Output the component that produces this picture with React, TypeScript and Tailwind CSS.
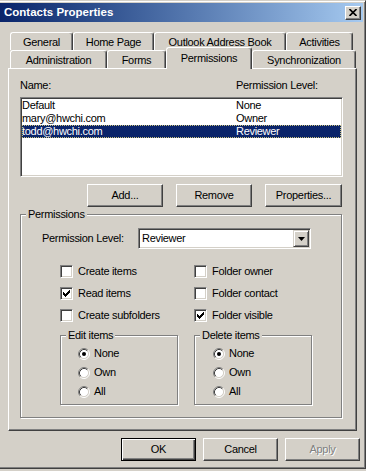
import { ReactNode } from 'react'

const raised =
  'border border-t-white border-l-white border-r-[#404040] border-b-[#404040] shadow-[inset_-1px_-1px_#808080]'
const sunken =
  'border border-t-[#808080] border-l-[#808080] border-r-white border-b-white shadow-[inset_1px_1px_#404040,inset_-1px_-1px_#d4d0c8]'

function Tab({ label, className = '', selected = false }: { label: string; className?: string; selected?: boolean }) {
  if (selected) {
    return (
      <div
        className={`relative z-10 -mb-px flex h-[22px] justify-center rounded-t-[3px] border-t border-l border-r border-t-white border-l-white border-r-[#404040] bg-[#d4d0c8] pt-[4px] shadow-[inset_-1px_0_#808080] ${className}`}
      >
        {label}
      </div>
    )
  }
  return (
    <div
      className={`flex h-[18px] items-center justify-center rounded-t-[3px] border-t border-l border-r border-t-white border-l-white border-r-[#404040] pt-px shadow-[inset_-1px_0_#808080] ${className}`}
    >
      {label}
    </div>
  )
}

function Button({ children, className = '', isDefault = false, disabled = false }: {
  children: ReactNode
  className?: string
  isDefault?: boolean
  disabled?: boolean
}) {
  const frame = isDefault
    ? 'border border-black shadow-[inset_1px_1px_#fff,inset_-1px_-1px_#404040,inset_-2px_-2px_#808080]'
    : raised
  return (
    <div
      className={`flex h-[23px] items-center justify-center ${frame} ${
        disabled ? 'text-[#808080] [text-shadow:1px_1px_0_#fff]' : ''
      } ${className}`}
    >
      {children}
    </div>
  )
}

function Group({ label, className = '', children }: { label: string; className?: string; children: ReactNode }) {
  return (
    <div className={`relative border border-[#808080] shadow-[inset_1px_1px_#fff,1px_1px_#fff] ${className}`}>
      <span className="absolute -top-[7px] left-[5px] bg-[#d4d0c8] px-[2px]">{label}</span>
      {children}
    </div>
  )
}

// classic 7x7 check glyph, drawn column by column
const checkCols = [2, 3, 4, 3, 2, 1, 0]

function Checkbox({ label, checked = false }: { label: string; checked?: boolean }) {
  return (
    <div className="flex h-[13px] items-center gap-[5px]">
      <span className={`block h-[13px] w-[13px] shrink-0 bg-white ${sunken}`}>
        {checked && (
          <svg width="11" height="11" viewBox="0 0 11 11" shapeRendering="crispEdges">
            {checkCols.map((y, i) => (
              <rect key={i} x={2 + i} y={2 + y} width="1" height="3" fill="#000" />
            ))}
          </svg>
        )}
      </span>
      <span>{label}</span>
    </div>
  )
}

function Radio({ label, checked = false }: { label: string; checked?: boolean }) {
  return (
    <div className="flex h-[13px] items-center gap-[4px]">
      <svg width="12" height="12" viewBox="0 0 12 12" className="shrink-0">
        <circle cx="6" cy="6" r="4.5" fill="#fff" />
        <path d="M2.11 9.89 A5.5 5.5 0 0 1 9.89 2.11" stroke="#808080" fill="none" />
        <path d="M9.89 2.11 A5.5 5.5 0 0 1 2.11 9.89" stroke="#fff" fill="none" />
        <path d="M2.82 9.18 A4.5 4.5 0 0 1 9.18 2.82" stroke="#404040" fill="none" />
        <path d="M9.18 2.82 A4.5 4.5 0 0 1 2.82 9.18" stroke="#d4d0c8" fill="none" />
        {checked && <circle cx="6" cy="6" r="2" fill="#000" />}
      </svg>
      <span>{label}</span>
    </div>
  )
}

const entries = [
  { name: 'Default', level: 'None' },
  { name: 'mary@hwchi.com', level: 'Owner' },
  { name: 'todd@hwchi.com', level: 'Reviewer', selected: true },
]

export default function App() {
  return (
    <div className="h-[471px] w-[366px] overflow-hidden bg-[#d4d0c8] font-['Liberation_Sans',Arial,sans-serif] text-[11px] leading-[13px] tracking-[-0.3px] text-black">
      <div className="h-[469px] w-[366px] border-t border-r border-b border-t-[#d4d0c8] border-r-[#404040] border-b-[#404040] pt-[2px] shadow-[inset_0_1px_#fff,inset_-1px_-1px_#808080]">
        {/* Title bar */}
        <div className="mr-[2px] flex h-[19px] items-center justify-between bg-linear-to-r from-[#0a246a] to-[#a6caf0] pr-[2px] pl-[4px]">
          <span className="text-[11.5px] font-bold tracking-normal text-white">Contacts Properties</span>
          <div className={`flex h-[14px] w-[16px] items-center justify-center bg-[#d4d0c8] ${raised}`}>
            <svg width="8" height="7" viewBox="0 0 8 7">
              <path d="M0.5 0 L7.5 7 M7.5 0 L0.5 7" stroke="#000" strokeWidth="1.6" />
            </svg>
          </div>
        </div>

        {/* Tabs */}
        <div className="mt-[10px] ml-[10px] flex">
          <Tab label="General" className="w-[63px]" />
          <Tab label="Home Page" className="w-[81px]" />
          <Tab label="Outlook Address Book" className="w-[132px]" />
          <Tab label="Activities" className="w-[67px]" />
        </div>
        <div className="ml-[10px] flex h-[18px] items-end">
          <Tab label="Administration" className="w-[97px]" />
          <Tab label="Forms" className="w-[59px]" />
          <Tab label="Permissions" className="w-[86px]" selected />
          <Tab label="Synchronization" className="w-[104px]" />
        </div>

        {/* Tab page */}
        <div className="ml-[8px] h-[363px] w-[349px] border border-t-white border-l-white border-r-[#404040] border-b-[#404040] pt-[10px] pl-[11px] shadow-[inset_-1px_-1px_#808080]">
          <div className="flex">
            <span className="w-[216px]">Name:</span>
            <span>Permission Level:</span>
          </div>

          <div className={`mt-[5px] h-[80px] w-[323px] bg-white ${sunken}`}>
            <div className="p-px">
              {entries.map(e => (
                <div
                  key={e.name}
                  className={`flex h-[13px] ${
                    e.selected ? 'bg-[#0a246a] text-white outline-1 -outline-offset-1 outline-dotted outline-[#c8c07a]' : ''
                  }`}
                >
                  <span className="w-[214px]">{e.name}</span>
                  <span>{e.level}</span>
                </div>
              ))}
            </div>
          </div>

          <div className="mt-[7px] flex gap-[13px] pl-[67px]">
            <Button className="w-[76px]">Add...</Button>
            <Button className="w-[76px]">Remove</Button>
            <Button className="w-[77px]">Properties...</Button>
          </div>

          <Group label="Permissions" className="mt-[7px] h-[204px] w-[322px]">
            <div className="mt-[13px] flex items-center pl-[21px]">
              <span className="w-[96px]">Permission Level:</span>
              <div className={`flex h-[21px] w-[173px] bg-white p-px ${sunken}`}>
                <span className="flex flex-1 items-center pl-[2px]">Reviewer</span>
                <div className="flex h-[17px] w-[16px] items-center justify-center border border-t-[#d4d0c8] border-l-[#d4d0c8] border-r-[#404040] border-b-[#404040] bg-[#d4d0c8] shadow-[inset_1px_1px_#fff,inset_-1px_-1px_#808080]">
                  <svg width="7" height="4" viewBox="0 0 7 4">
                    <path d="M0 0 H7 L3.5 4 Z" fill="#000" />
                  </svg>
                </div>
              </div>
            </div>

            <div className="mt-[16px] grid grid-cols-[134px_auto] gap-y-[9px] pl-[39px]">
              <Checkbox label="Create items" />
              <Checkbox label="Folder owner" />
              <Checkbox label="Read items" checked />
              <Checkbox label="Folder contact" />
              <Checkbox label="Create subfolders" />
              <Checkbox label="Folder visible" checked />
            </div>

            <div className="mt-[13px] flex gap-[16px] pl-[39px]">
              <Group label="Edit items" className="h-[70px] w-[118px]">
                <div className="flex flex-col gap-[6px] pt-[11px] pl-[17px]">
                  <Radio label="None" checked />
                  <Radio label="Own" />
                  <Radio label="All" />
                </div>
              </Group>
              <Group label="Delete items" className="h-[70px] w-[118px]">
                <div className="flex flex-col gap-[6px] pt-[11px] pl-[18px]">
                  <Radio label="None" checked />
                  <Radio label="Own" />
                  <Radio label="All" />
                </div>
              </Group>
            </div>
          </Group>
        </div>

        {/* Dialog buttons */}
        <div className="mt-[7px] ml-[121px] flex gap-[7px]">
          <Button className="w-[75px]" isDefault>OK</Button>
          <Button className="w-[75px]">Cancel</Button>
          <Button className="w-[75px]" disabled>Apply</Button>
        </div>
      </div>
    </div>
  )
}
